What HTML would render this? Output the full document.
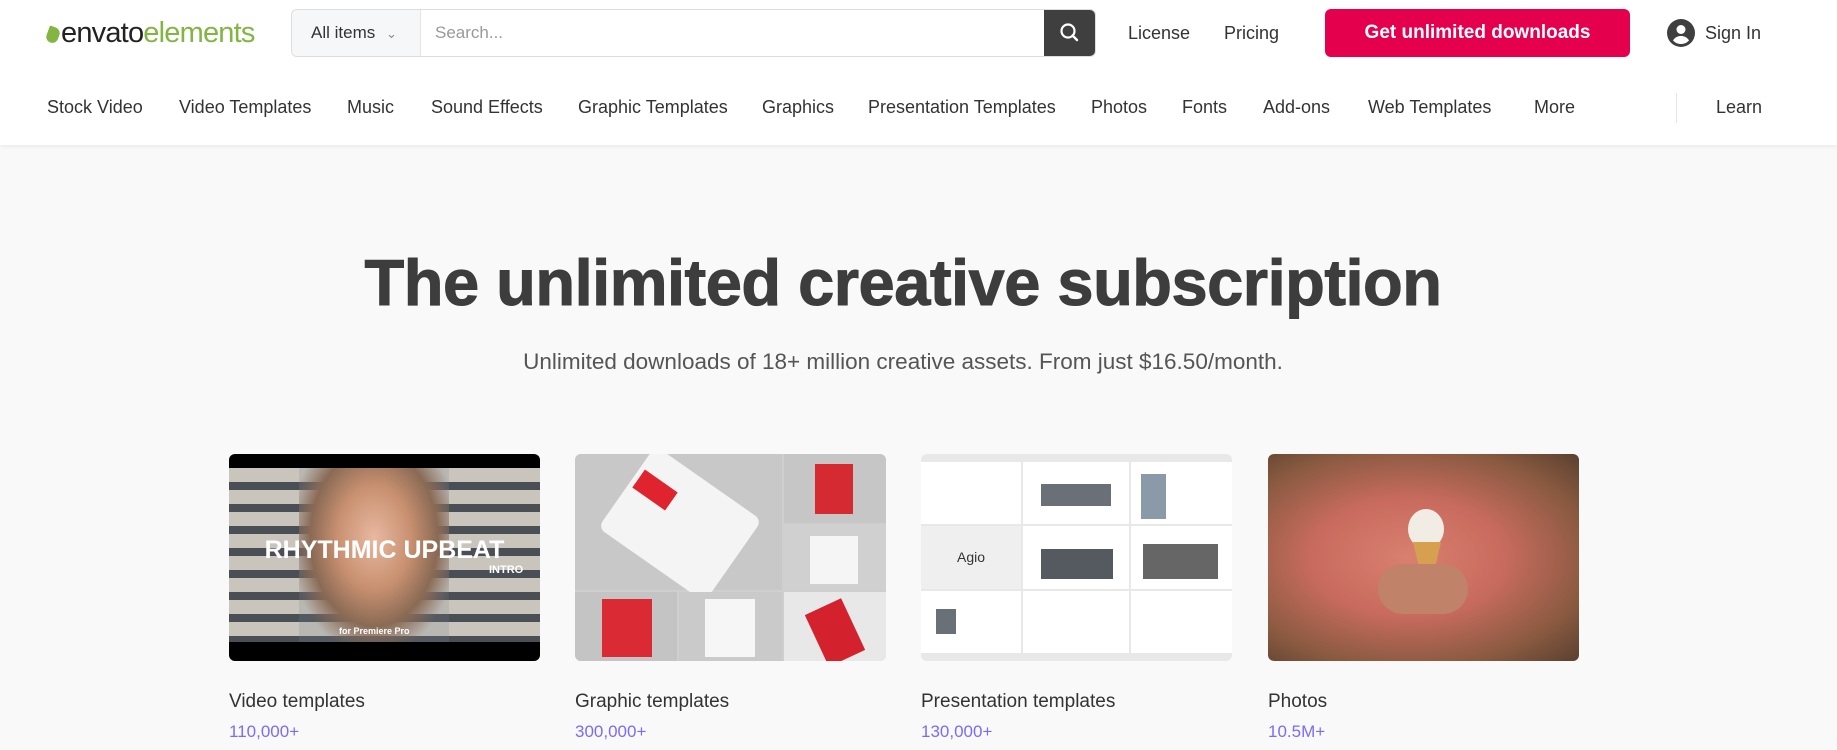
<!DOCTYPE html>
<html><head><meta charset="utf-8"><style>
*{margin:0;padding:0;box-sizing:border-box}
body{width:1837px;height:750px;overflow:hidden;background:#f9f9f9;font-family:"Liberation Sans",sans-serif;color:#333;position:relative}
.hdr{position:absolute;left:0;top:0;width:1837px;height:145px;background:#fff;box-shadow:0 2px 4px rgba(0,0,0,.06)}
.a{position:absolute;white-space:nowrap}
.logo{left:47px;top:17px;font-size:29px;letter-spacing:-0.8px}
.search{left:291px;top:9px;width:805px;height:48px;border:1px solid #ddd;border-radius:6px;background:#fff;overflow:hidden}
.sel{position:absolute;left:0;top:0;width:129px;height:46px;background:#f6f7f9;border-right:1px solid #e5e5e5;font-size:17px;line-height:46px;padding-left:19px;color:#333}
.ph{position:absolute;left:143px;top:0;line-height:46px;font-size:17px;color:#999}
.sbtn{position:absolute;right:0;top:0;width:51px;height:46px;background:#3f3f3f}
.nav{font-size:18px;color:#333;top:97px}
.top{font-size:18px;top:23px;color:#333}
.btn{left:1325px;top:9px;width:305px;height:48px;background:#e4004c;border-radius:6px;color:#fff;font-weight:bold;font-size:19px;text-align:center;line-height:48px}
h1{position:absolute;left:0;width:1806px;top:245px;text-align:center;font-size:65px;font-weight:bold;color:#3d3d3d;letter-spacing:-0.5px;-webkit-text-stroke:1px #3d3d3d}
.sub{left:0;width:1806px;text-align:center;top:349px;font-size:22.5px;color:#555}
.card{position:absolute;top:454px;width:311px;height:207px;border-radius:6px;overflow:hidden}
.t{font-size:19px;color:#333;top:691px}
.c{font-size:17px;color:#7b6cf6;top:722px}
</style></head><body>
<div class="hdr">
<div class="a logo"><span style="display:inline-block;width:12px;height:16px;background:#82b541;border-radius:2px 10px 10px 10px;transform:rotate(20deg);vertical-align:-1px;margin-right:2px"></span><span style="color:#222">envato</span><span style="color:#82b541">elements</span></div>
<div class="a search"><div class="sel">All items <span style="color:#888;font-size:13px;margin-left:6px">&#8964;</span></div><div class="ph">Search...</div>
<div class="sbtn"><svg width="51" height="46" viewBox="0 0 51 46"><circle cx="24" cy="21" r="6.5" fill="none" stroke="#fff" stroke-width="2.2"/><line x1="28.5" y1="25.5" x2="33" y2="30" stroke="#fff" stroke-width="2.4" stroke-linecap="round"/></svg></div></div>
<div class="a top" style="left:1128px">License</div>
<div class="a top" style="left:1224px">Pricing</div>
<div class="a btn">Get unlimited downloads</div>
<svg class="a" style="left:1667px;top:19px" width="28" height="28" viewBox="0 0 28 28"><circle cx="14" cy="14" r="14" fill="#3f3f3f"/><circle cx="14" cy="10.5" r="4.5" fill="#fff"/><path d="M6 21.5c2-3.5 5-4.5 8-4.5s6 1 8 4.5c-2 2.3-5 3.5-8 3.5s-6-1.2-8-3.5z" fill="#fff"/></svg>
<div class="a top" style="left:1705px">Sign In</div>
<div class="a nav" style="left:47px">Stock Video</div>
<div class="a nav" style="left:179px">Video Templates</div>
<div class="a nav" style="left:347px">Music</div>
<div class="a nav" style="left:431px">Sound Effects</div>
<div class="a nav" style="left:578px">Graphic Templates</div>
<div class="a nav" style="left:762px">Graphics</div>
<div class="a nav" style="left:868px">Presentation Templates</div>
<div class="a nav" style="left:1091px">Photos</div>
<div class="a nav" style="left:1182px">Fonts</div>
<div class="a nav" style="left:1263px">Add-ons</div>
<div class="a nav" style="left:1368px">Web Templates</div>
<div class="a nav" style="left:1534px">More</div>
<div class="a" style="left:1676px;top:93px;width:1px;height:30px;background:#e5e5e5"></div>
<div class="a nav" style="left:1716px">Learn</div>
</div>
<h1>The unlimited creative subscription</h1>
<div class="a sub">Unlimited downloads of 18+ million creative assets. From just $16.50/month.</div>

<div class="card" style="left:229px;background:#000">
<div style="position:absolute;left:0;top:14px;width:311px;height:174px;background:repeating-linear-gradient(180deg,#c9c4bc 0 14px,#4a4f55 14px 22px)"></div>
<div style="position:absolute;left:70px;top:14px;width:150px;height:174px;background:radial-gradient(ellipse at 50% 40%,#e8b8a0 0,#c89070 35%,#8a6a55 60%,rgba(120,130,140,.2) 80%)"></div>
<div style="position:absolute;left:0;top:82px;width:311px;text-align:center;color:#fff;font-weight:bold;font-size:25px">RHYTHMIC UPBEAT</div>
<div style="position:absolute;left:260px;top:110px;color:#fff;font-size:11px;font-weight:bold">INTRO</div>
<div style="position:absolute;left:110px;top:172px;color:#fff;font-size:9px;font-weight:bold">for Premiere Pro</div>
</div>
<div class="card" style="left:575px;background:#cfcfcf">
<div style="position:absolute;left:0;top:0;width:207px;height:136px;background:#c8c8c8"></div>
<div style="position:absolute;left:40px;top:20px;width:130px;height:100px;background:#f4f4f4;transform:rotate(35deg);border-radius:8px"></div>
<div style="position:absolute;left:60px;top:25px;width:40px;height:22px;background:#e0242f;transform:rotate(35deg)"></div>
<div style="position:absolute;left:209px;top:0;width:102px;height:69px;background:#c6c6c6"></div>
<div style="position:absolute;left:240px;top:10px;width:38px;height:50px;background:#d62a33"></div>
<div style="position:absolute;left:209px;top:71px;width:102px;height:65px;background:#d0d0d0"></div>
<div style="position:absolute;left:235px;top:82px;width:48px;height:48px;background:#f5f5f5"></div>
<div style="position:absolute;left:0;top:138px;width:102px;height:69px;background:#c4c4c4"></div>
<div style="position:absolute;left:27px;top:145px;width:50px;height:58px;background:#da2a33"></div>
<div style="position:absolute;left:104px;top:138px;width:103px;height:69px;background:#cacaca"></div>
<div style="position:absolute;left:130px;top:145px;width:50px;height:58px;background:#f6f6f6"></div>
<div style="position:absolute;left:209px;top:138px;width:102px;height:69px;background:#e8e8e8"></div>
<div style="position:absolute;left:240px;top:150px;width:40px;height:57px;background:#d3222d;transform:rotate(-25deg)"></div>
</div>
<div class="card" style="left:921px;background:#e8e8e8">
<div style="position:absolute;left:0;top:8px;width:100px;height:62px;background:#fff"></div>
<div style="position:absolute;left:102px;top:8px;width:106px;height:62px;background:#fff"></div>
<div style="position:absolute;left:210px;top:8px;width:101px;height:62px;background:#fff"></div>
<div style="position:absolute;left:0;top:72px;width:100px;height:63px;background:#efefef;font-size:14px;color:#333;text-align:center;line-height:63px">Agio</div>
<div style="position:absolute;left:102px;top:72px;width:106px;height:63px;background:#fff"></div>
<div style="position:absolute;left:210px;top:72px;width:101px;height:63px;background:#fff"></div>
<div style="position:absolute;left:0;top:137px;width:100px;height:62px;background:#fff"></div>
<div style="position:absolute;left:102px;top:137px;width:106px;height:62px;background:#fff"></div>
<div style="position:absolute;left:210px;top:137px;width:101px;height:62px;background:#fff"></div>
<div style="position:absolute;left:120px;top:30px;width:70px;height:22px;background:#6a6f78"></div>
<div style="position:absolute;left:120px;top:95px;width:72px;height:30px;background:#555a60"></div>
<div style="position:absolute;left:222px;top:90px;width:75px;height:35px;background:#666"></div>
<div style="position:absolute;left:220px;top:20px;width:25px;height:45px;background:#8a9aa8"></div>
<div style="position:absolute;left:15px;top:155px;width:20px;height:25px;background:#6a7078"></div>
</div>
<div class="card" style="left:1268px;background:radial-gradient(ellipse at 45% 50%,#d98070 0,#c86b5e 40%,#8a5a40 75%,#5a4030 100%)">
<div style="position:absolute;left:140px;top:55px;width:36px;height:40px;background:#f2ede4;border-radius:50%"></div>
<div style="position:absolute;left:145px;top:88px;width:0;height:0;border-left:14px solid transparent;border-right:14px solid transparent;border-top:60px solid #d7a050"></div>
<div style="position:absolute;left:110px;top:110px;width:90px;height:50px;background:#c08268;border-radius:30px"></div>
</div>

<div class="a t" style="left:229px">Video templates</div>
<div class="a t" style="left:575px">Graphic templates</div>
<div class="a t" style="left:921px">Presentation templates</div>
<div class="a t" style="left:1268px">Photos</div>
<div class="a c" style="left:229px">110,000+</div>
<div class="a c" style="left:575px">300,000+</div>
<div class="a c" style="left:921px">130,000+</div>
<div class="a c" style="left:1268px">10.5M+</div>
</body></html>
